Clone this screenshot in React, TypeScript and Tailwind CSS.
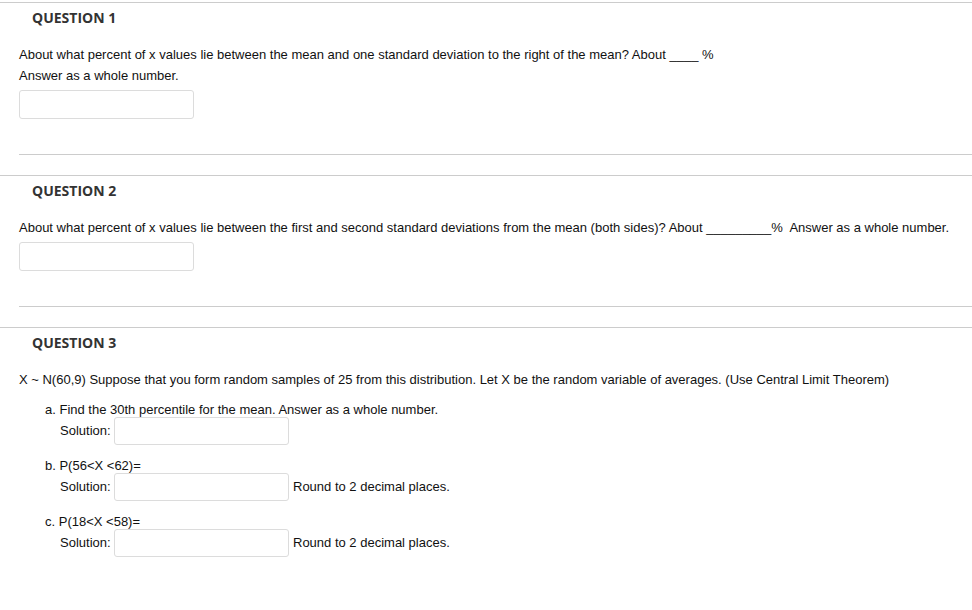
export default function App() {
  const body = "font-['Liberation_Sans',Arial,sans-serif] text-[13px] text-[#111]";
  const heading =
    "font-['Open_Sans',sans-serif] font-bold text-[14px] leading-[20px] text-[#333] pl-[32px] pt-[5px]";
  const input = "block w-[175px] h-[29px] border border-[#dcdcdc] rounded-[3px] bg-white";

  return (
    <div className="w-[972px] h-[610px] bg-white pt-[2px] overflow-hidden">
      {/* question 1 */}
      <section className="border-t border-[#cccccc]">
        <h3 className={heading}>QUESTION 1</h3>
        <div className={body + " pl-[19px] pt-[16px] leading-[21px]"}>
          <p>
            About what percent of x values lie between the mean and one standard deviation to the
            right of the mean? About ____ %
          </p>
          <p>Answer as a whole number.</p>
          <input type="text" className={input + " mt-[4px]"} />
        </div>
        <div className="ml-[19px] mt-[35px] border-t border-[#cccccc]" />
      </section>

      {/* question 2 */}
      <section className="mt-[20px] border-t border-[#cccccc]">
        <h3 className={heading}>QUESTION 2</h3>
        <div className={body + " pl-[19px] pt-[16px] leading-[21px]"}>
          <p>
            About what percent of x values lie between the first and second standard deviations from
            the mean (both sides)? About _________%&nbsp; Answer as a whole number.
          </p>
          <input type="text" className={input + " mt-[4px]"} />
        </div>
        <div className="ml-[19px] mt-[35px] border-t border-[#cccccc]" />
      </section>

      {/* question 3 */}
      <section className="mt-[20px] border-t border-[#cccccc]">
        <h3 className={heading}>QUESTION 3</h3>
        <div className={body + " pl-[19px] pt-[16px]"}>
          <p className="leading-[21px]">
            X ~ N(60,9) Suppose that you form random samples of 25 from this distribution. Let X be
            the random variable of averages. (Use Central Limit Theorem)
          </p>
          <div className="pl-[26px] pt-[12px]">
            {[
              { label: "a. Find the 30th percentile for the mean. Answer as a whole number.", note: "" },
              { label: "b. P(56<X <62)=", note: "Round to 2 decimal places." },
              { label: "c. P(18<X <58)=", note: "Round to 2 decimal places." },
            ].map((item, i) => (
              <div key={i} className={i > 0 ? "mt-[13px]" : ""}>
                <p className="leading-[15px]">{item.label}</p>
                <div className="flex items-center pl-[15px] h-[28px]">
                  <span className="w-[54px]">Solution:</span>
                  <input
                    type="text"
                    className="block w-[175px] h-[28px] border border-[#dcdcdc] rounded-[3px] bg-white"
                  />
                  {item.note && <span className="ml-[4px]">{item.note}</span>}
                </div>
              </div>
            ))}
          </div>
        </div>
      </section>
    </div>
  );
}
